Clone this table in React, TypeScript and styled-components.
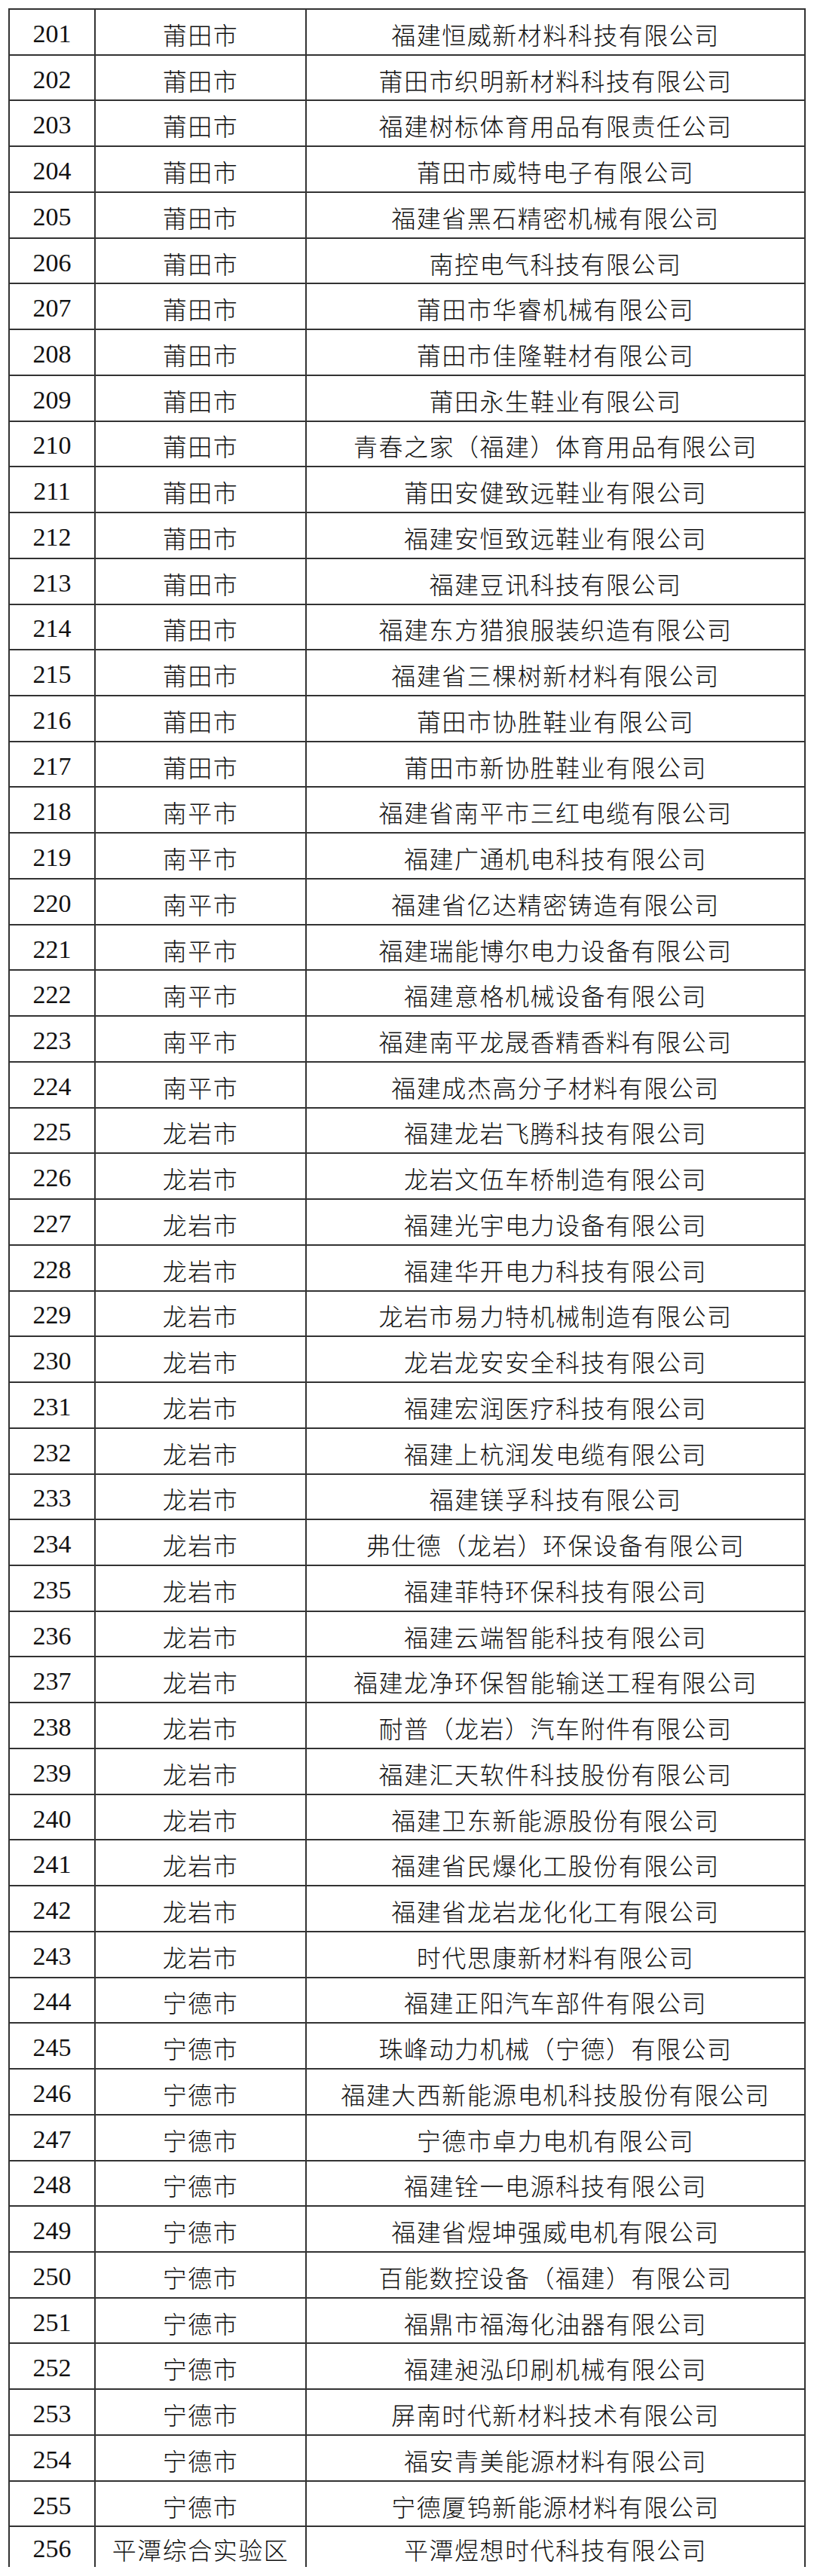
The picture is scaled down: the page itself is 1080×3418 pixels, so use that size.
import styled, { createGlobalStyle } from "styled-components";

type Row = [number, string, string];

const rows: Row[] = [
    [201, "莆田市", "福建恒威新材料科技有限公司"],
    [202, "莆田市", "莆田市织明新材料科技有限公司"],
    [203, "莆田市", "福建树标体育用品有限责任公司"],
    [204, "莆田市", "莆田市威特电子有限公司"],
    [205, "莆田市", "福建省黑石精密机械有限公司"],
    [206, "莆田市", "南控电气科技有限公司"],
    [207, "莆田市", "莆田市华睿机械有限公司"],
    [208, "莆田市", "莆田市佳隆鞋材有限公司"],
    [209, "莆田市", "莆田永生鞋业有限公司"],
    [210, "莆田市", "青春之家（福建）体育用品有限公司"],
    [211, "莆田市", "莆田安健致远鞋业有限公司"],
    [212, "莆田市", "福建安恒致远鞋业有限公司"],
    [213, "莆田市", "福建豆讯科技有限公司"],
    [214, "莆田市", "福建东方猎狼服装织造有限公司"],
    [215, "莆田市", "福建省三棵树新材料有限公司"],
    [216, "莆田市", "莆田市协胜鞋业有限公司"],
    [217, "莆田市", "莆田市新协胜鞋业有限公司"],
    [218, "南平市", "福建省南平市三红电缆有限公司"],
    [219, "南平市", "福建广通机电科技有限公司"],
    [220, "南平市", "福建省亿达精密铸造有限公司"],
    [221, "南平市", "福建瑞能博尔电力设备有限公司"],
    [222, "南平市", "福建意格机械设备有限公司"],
    [223, "南平市", "福建南平龙晟香精香料有限公司"],
    [224, "南平市", "福建成杰高分子材料有限公司"],
    [225, "龙岩市", "福建龙岩飞腾科技有限公司"],
    [226, "龙岩市", "龙岩文伍车桥制造有限公司"],
    [227, "龙岩市", "福建光宇电力设备有限公司"],
    [228, "龙岩市", "福建华开电力科技有限公司"],
    [229, "龙岩市", "龙岩市易力特机械制造有限公司"],
    [230, "龙岩市", "龙岩龙安安全科技有限公司"],
    [231, "龙岩市", "福建宏润医疗科技有限公司"],
    [232, "龙岩市", "福建上杭润发电缆有限公司"],
    [233, "龙岩市", "福建镁孚科技有限公司"],
    [234, "龙岩市", "弗仕德（龙岩）环保设备有限公司"],
    [235, "龙岩市", "福建菲特环保科技有限公司"],
    [236, "龙岩市", "福建云端智能科技有限公司"],
    [237, "龙岩市", "福建龙净环保智能输送工程有限公司"],
    [238, "龙岩市", "耐普（龙岩）汽车附件有限公司"],
    [239, "龙岩市", "福建汇天软件科技股份有限公司"],
    [240, "龙岩市", "福建卫东新能源股份有限公司"],
    [241, "龙岩市", "福建省民爆化工股份有限公司"],
    [242, "龙岩市", "福建省龙岩龙化化工有限公司"],
    [243, "龙岩市", "时代思康新材料有限公司"],
    [244, "宁德市", "福建正阳汽车部件有限公司"],
    [245, "宁德市", "珠峰动力机械（宁德）有限公司"],
    [246, "宁德市", "福建大西新能源电机科技股份有限公司"],
    [247, "宁德市", "宁德市卓力电机有限公司"],
    [248, "宁德市", "福建铨一电源科技有限公司"],
    [249, "宁德市", "福建省煜坤强威电机有限公司"],
    [250, "宁德市", "百能数控设备（福建）有限公司"],
    [251, "宁德市", "福鼎市福海化油器有限公司"],
    [252, "宁德市", "福建昶泓印刷机械有限公司"],
    [253, "宁德市", "屏南时代新材料技术有限公司"],
    [254, "宁德市", "福安青美能源材料有限公司"],
    [255, "宁德市", "宁德厦钨新能源材料有限公司"],
    [256, "平潭综合实验区", "平潭煜想时代科技有限公司"],
];

const App = () => {
    return (
        <>
            <GlobalStyle />
            <StyledTable>
                {rows.map(([no, city, company]) => (
                    <StyledRow key={no}>
                        <StyledCell $num>{no}</StyledCell>
                        <StyledCell>{city}</StyledCell>
                        <StyledCell>{company}</StyledCell>
                    </StyledRow>
                ))}
            </StyledTable>
        </>
    );
};

const GlobalStyle = createGlobalStyle`
    html, body {
        margin: 0;
        padding: 0;
        background: #fff;
    }
`;

// the grid's dark background shows through the 2px gaps as the rule lines
const StyledTable = styled.div`
    display: grid;
    grid-template-columns: 112px 278px 660px;
    grid-template-rows: repeat(55, 58.745px) 53px;
    gap: 2px;
    width: 1054px;
    margin: 11px 0 0 11px;
    padding: 2px 2px 0 2px;
    background: #333;
`;

const StyledRow = styled.div`
    display: contents;
`;

const StyledCell = styled.div<{ $num?: boolean }>`
    display: flex;
    align-items: center;
    justify-content: center;
    padding-top: 5px;
    box-sizing: border-box;
    background: #fff;
    color: #111;
    white-space: nowrap;
    font-family: ${({ $num }) =>
        $num
            ? '"Liberation Serif", serif'
            : '"Liberation Serif", "Noto Sans CJK SC", sans-serif'};
    font-size: ${({ $num }) => ($num ? "34px" : "32px")};
    font-weight: ${({ $num }) => ($num ? 400 : 300)};
    letter-spacing: ${({ $num }) => ($num ? "0" : "1.5px")};
`;

export default App;
